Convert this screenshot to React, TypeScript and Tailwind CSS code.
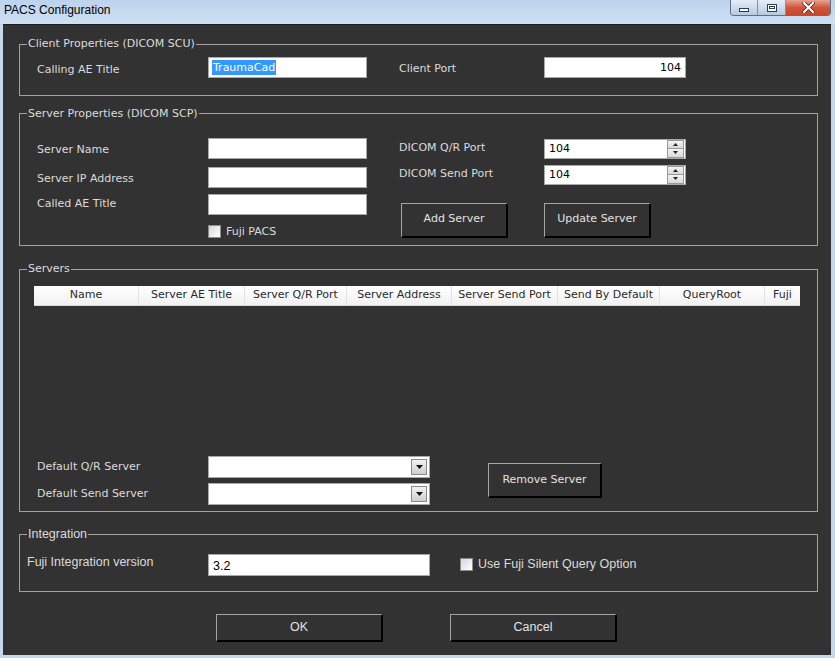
import React from "react";

function TextBox({ w, h = 21, children, right = false }: { w: number; h?: number; children?: React.ReactNode; right?: boolean }) {
  return (
    <div
      className={`shrink-0 bg-white border border-[#a8a8a8] flex items-center text-black ${right ? "justify-end pr-[4px]" : "pl-[3px]"}`}
      style={{ width: w, height: h }}
    >
      {children}
    </div>
  );
}

function Spin({ value }: { value: string }) {
  return (
    <div className="shrink-0 w-[142px] h-[20px] bg-white border border-[#a8a8a8] flex items-center text-black">
      <span className="pl-[4px] pt-[2px] flex-1">{value}</span>
      <div className="w-[17px] h-[18px] flex flex-col mr-[1px]">
        <div className="flex-1 bg-gradient-to-b from-[#f4f4f4] to-[#d8d8d8] border border-[#9a9a9a] flex items-center justify-center">
          <svg width="5" height="3" viewBox="0 0 5 3"><path d="M2.5 0 L5 3 L0 3 Z" fill="#222" /></svg>
        </div>
        <div className="flex-1 bg-gradient-to-b from-[#f4f4f4] to-[#d8d8d8] border border-t-0 border-[#9a9a9a] flex items-center justify-center">
          <svg width="5" height="3" viewBox="0 0 5 3"><path d="M0 0 L5 0 L2.5 3 Z" fill="#222" /></svg>
        </div>
      </div>
    </div>
  );
}

function Combo() {
  return (
    <div className="shrink-0 w-[222px] h-[22px] bg-white border border-[#a8a8a8] flex items-center justify-end pr-[2px]">
      <div className="w-[16px] h-[16px] bg-gradient-to-b from-[#f2f2f2] to-[#cfcfcf] border border-[#8a8a8a] flex items-center justify-center">
        <svg width="7" height="4" viewBox="0 0 7 4"><path d="M0 0 L7 0 L3.5 4 Z" fill="#111" /></svg>
      </div>
    </div>
  );
}

function Check() {
  return <div className="shrink-0 w-[13px] h-[13px] bg-gradient-to-br from-[#d6d6d6] to-white border border-[#8c8c8c]" />;
}

function Btn({ w, h, children, narrow = false }: { w: number; h: number; children: React.ReactNode; narrow?: boolean }) {
  return (
    <div
      className={`shrink-0 bg-[#323232] border-t border-l border-[#a4a4a4] border-r-2 border-b-2 border-r-black border-b-black flex items-center justify-center text-[#e2e2e2] ${narrow ? "font-['Liberation_Sans',sans-serif] text-[12.5px]" : ""}`}
      style={{ width: w, height: h }}
    >
      {children}
    </div>
  );
}

function Group({ title, children, className = "" }: { title: string; children: React.ReactNode; className?: string }) {
  return (
    <fieldset className={`w-[799px] border border-[#a2a2a2] ${className}`}>
      <legend className="ml-[7px] px-[1px] leading-[14px]">{title}</legend>
      {children}
    </fieldset>
  );
}

const cols: [string, number][] = [
  ["Name", 105],
  ["Server AE Title", 106],
  ["Server Q/R Port", 102],
  ["Server Address", 105],
  ["Server Send Port", 106],
  ["Send By Default", 102],
  ["QueryRoot", 105],
  ["Fuji", 35],
];

export default function App() {
  return (
    <div className="w-[835px] h-[658px] flex flex-col bg-[#c3d7ed] font-['DejaVu_Sans',sans-serif] text-[11px] text-[#dcdcdc] overflow-hidden">
      {/* Title bar */}
      <div className="h-[24px] shrink-0 flex items-start bg-gradient-to-b from-[#bcd3ec] to-[#cfe0f3]">
        <span className="font-['Liberation_Sans',sans-serif] text-[12px] leading-[15px] text-black ml-[4px] mt-[3px]">PACS Configuration</span>
        <div className="ml-auto mr-[4px] flex h-[16px] rounded-b-[4px] border border-t-0 border-[#5a6e8c] overflow-hidden">
          <div className="w-[27px] bg-gradient-to-b from-[#e6eef8] to-[#b7c9e0] border-r border-[#7e90ab] flex items-center justify-center">
            <div className="w-[10px] h-[4px] mt-[4px] border border-[#2e3c52] bg-white" />
          </div>
          <div className="w-[28px] bg-gradient-to-b from-[#e6eef8] to-[#b7c9e0] border-r border-[#7e90ab] flex items-center justify-center">
            <div className="w-[10px] h-[8px] border border-[#2e3c52] bg-white flex items-center justify-center">
              <div className="w-[6px] h-[3px] border border-[#2e3c52]" />
            </div>
          </div>
          <div className="w-[44px] bg-gradient-to-b from-[#e8a392] via-[#d0553c] to-[#c9452a] flex items-center justify-center">
            <svg width="13" height="11" viewBox="0 0 13 11">
              <path d="M2 1 L11 10 M11 1 L2 10" stroke="#5a1a10" strokeWidth="3.6" strokeLinecap="round" />
              <path d="M2 1 L11 10 M11 1 L2 10" stroke="#ffffff" strokeWidth="2.2" strokeLinecap="round" />
            </svg>
          </div>
        </div>
      </div>

      {/* Content */}
      <div className="flex-1 ml-[3px] mr-[4px] mb-[3px] bg-[#323232] border-t border-[#1c1c1c] pl-[16px] flex flex-col">
        {/* Client Properties */}
        <Group title="Client Properties (DICOM SCU)" className="mt-[12px]">
          <div className="flex items-center pt-[6px] pb-[16px] pl-[17px]">
            <div className="w-[171px] shrink-0 pt-[5px]">Calling AE Title</div>
            <TextBox w={159}>
              <span className="bg-[#3399ff] text-white px-[1px] leading-[15px]">TraumaCad</span>
            </TextBox>
            <div className="w-[32px] shrink-0" />
            <div className="w-[145px] shrink-0 pt-[3px]">Client Port</div>
            <TextBox w={142} right>104</TextBox>
          </div>
        </Group>

        {/* Server Properties */}
        <Group title="Server Properties (DICOM SCP)" className="mt-[11px]">
          <div className="flex items-start pl-[17px]">
            <div className="flex flex-col w-[330px] shrink-0 pb-[5px]">
              <div className="flex items-center mt-[17px]">
                <div className="w-[171px] shrink-0 pt-[4px]">Server Name</div>
                <TextBox w={159} />
              </div>
              <div className="flex items-center mt-[8px]">
                <div className="w-[171px] shrink-0 pt-[4px]">Server IP Address</div>
                <TextBox w={159} />
              </div>
              <div className="flex items-center mt-[6px]">
                <div className="w-[171px] shrink-0">Called AE Title</div>
                <TextBox w={159} />
              </div>
              <div className="flex items-center mt-[9px] pl-[171px]">
                <Check />
                <span className="ml-[5px]">Fuji PACS</span>
              </div>
            </div>
            <div className="w-[32px] shrink-0" />
            <div className="flex flex-col">
              <div className="flex items-center mt-[18px]">
                <div className="w-[145px] shrink-0">DICOM Q/R Port</div>
                <Spin value="104" />
              </div>
              <div className="flex items-center mt-[6px]">
                <div className="w-[145px] shrink-0">DICOM Send Port</div>
                <Spin value="104" />
              </div>
              <div className="flex mt-[18px] ml-[2px]">
                <Btn w={107} h={35}>Add Server</Btn>
                <div className="w-[36px] shrink-0" />
                <Btn w={107} h={35}>Update Server</Btn>
              </div>
            </div>
          </div>
        </Group>

        {/* Servers */}
        <Group title="Servers" className="mt-[16px]">
          <div className="flex flex-col">
            <div className="ml-[14px] mt-[10px] w-[766px] h-[20px] flex bg-gradient-to-b from-white to-[#f1f1f1] border-b border-[#d6d6d6] text-[#2a2a2a]">
              {cols.map(([name, w], i) => (
                <div
                  key={name}
                  className={`flex items-center justify-center shrink-0 ${i < cols.length - 1 ? "border-r border-[#e2e2e2]" : ""}`}
                  style={{ width: w }}
                >
                  {name}
                </div>
              ))}
            </div>
            <div className="h-[150px]" />
            <div className="flex items-start pl-[17px] pb-[6px]">
              <div className="flex flex-col">
                <div className="flex items-center">
                  <div className="w-[171px] shrink-0">Default Q/R Server</div>
                  <Combo />
                </div>
                <div className="flex items-center mt-[5px]">
                  <div className="w-[171px] shrink-0">Default Send Server</div>
                  <Combo />
                </div>
              </div>
              <div className="ml-[58px] mt-[7px]">
                <Btn w={114} h={35}>Remove Server</Btn>
              </div>
            </div>
          </div>
        </Group>

        {/* Integration */}
        <Group title="Integration" className="mt-[15px] text-[12.5px] font-['Liberation_Sans',sans-serif]">
          <div className="flex items-start pl-[7px] pt-[13px] pb-[15px]">
            <div className="w-[181px] shrink-0 mt-[-1px]">Fuji Integration version</div>
            <div className="w-[222px] h-[22px] shrink-0 bg-white border border-[#a8a8a8] flex items-center pl-[4px] pt-[2px] text-black">3.2</div>
            <div className="flex items-center ml-[30px] mt-[1px]">
              <Check />
              <span className="ml-[5px]">Use Fuji Silent Query Option</span>
            </div>
          </div>
        </Group>

        {/* OK / Cancel */}
        <div className="flex mt-[22px] ml-[197px]">
          <Btn w={167} h={28} narrow>OK</Btn>
          <div className="w-[67px] shrink-0" />
          <Btn w={167} h={28} narrow>Cancel</Btn>
        </div>
      </div>
    </div>
  );
}
